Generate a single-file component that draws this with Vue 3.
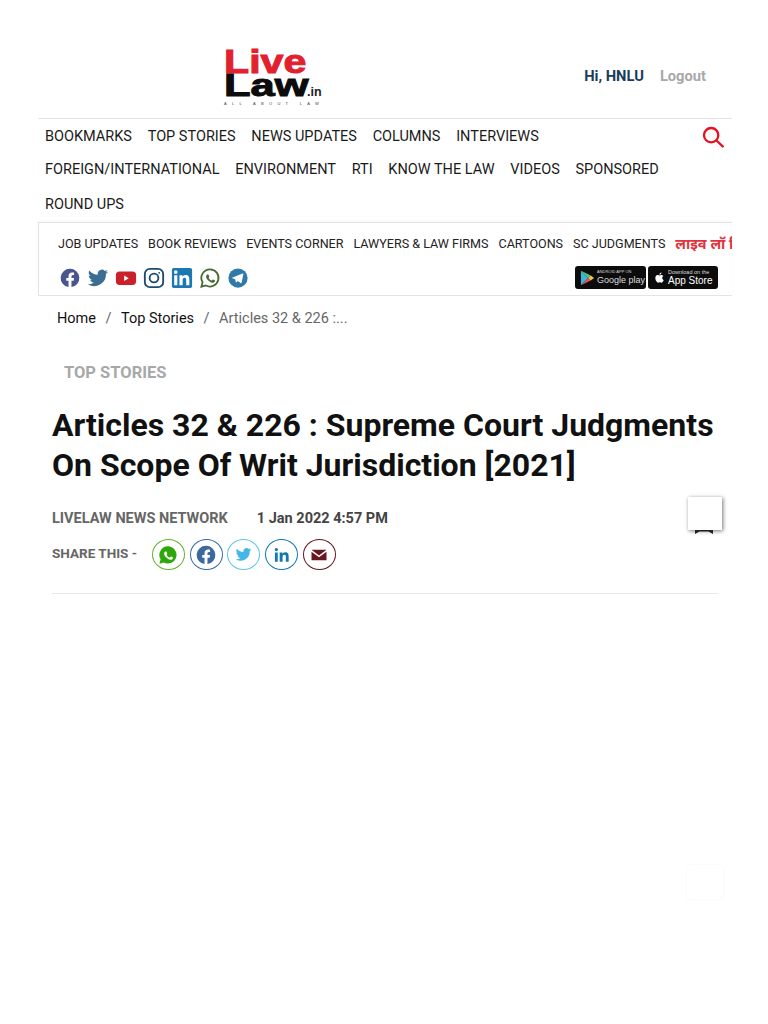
<script setup>
const mainNav = [
  ['BOOKMARKS', 'TOP STORIES', 'NEWS UPDATES', 'COLUMNS', 'INTERVIEWS'],
  ['FOREIGN/INTERNATIONAL', 'ENVIRONMENT', 'RTI', 'KNOW THE LAW', 'VIDEOS', 'SPONSORED'],
  ['ROUND UPS'],
];
const subNav = ['JOB UPDATES', 'BOOK REVIEWS', 'EVENTS CORNER', 'LAWYERS & LAW FIRMS', 'CARTOONS', 'SC JUDGMENTS'];
const fbPath = 'M12 2a10 10 0 0 0-1.6 19.9v-7H7.9V12h2.5V9.8c0-2.5 1.5-3.9 3.8-3.9 1.1 0 2.2.2 2.2.2v2.5h-1.2c-1.2 0-1.6.8-1.6 1.6V12h2.8l-.4 2.9h-2.4v7A10 10 0 0 0 12 2z';
const twPath = 'M23 5.1c-.8.4-1.7.6-2.6.7.9-.6 1.6-1.4 2-2.5-.9.5-1.8.9-2.9 1.1a4.5 4.5 0 0 0-7.7 4.1C8 8.300 4.700 6.500 2.500 3.800c-1.200 2-.6 4.700 1.400 6-.7 0-1.400-.2-2-.6 0 2.200 1.500 4.100 3.600 4.500-.7.2-1.400.2-2 .1.6 1.800 2.200 3.100 4.200 3.100A9.100 9.100 0 0 1 1 18.800a12.800 12.800 0 0 0 19.700-11.400c.9-.6 1.700-1.400 2.300-2.300z';
const waBubble = 'M12 2.500a9.400 9.400 0 0 0-8.100 14.200L2.600 21.500l4.900-1.300A9.400 9.400 0 1 0 12 2.500z';
const waPhone = 'M8.800 7.200c-.3 0-.7.100-1 .5-.4.400-1.100 1.100-1.100 2.500s1 2.900 1.200 3.100c.2.200 2.100 3.200 5.100 4.400 2.500 1 3 .8 3.600.7.600-.1 1.800-.7 2-1.500.2-.700.2-1.300.2-1.400-.1-.200-.3-.3-.6-.4l-2-1c-.3-.1-.5-.1-.7.200l-.9 1.100c-.2.200-.3.200-.6.100-.3-.200-1.200-.5-2.300-1.400-.8-.8-1.400-1.700-1.600-2-.2-.3 0-.5.100-.6l.5-.6c.1-.200.2-.3.300-.5.100-.2 0-.4 0-.5l-.9-2.100c-.2-.5-.4-.5-.6-.5z';
const liPath = 'M5.200 3.500a2 2 0 1 1 0 4 2 2 0 0 1 0-4zM3.500 9h3.400v11H3.500zM9.200 9h3.300v1.500c.5-.9 1.600-1.800 3.300-1.800 3.500 0 4.200 2.300 4.200 5.300v6h-3.400v-5.300c0-1.300 0-2.900-1.800-2.900s-2.100 1.400-2.100 2.800V20H9.200z';
</script>

<template>
  <div class="page">
    <header class="site-head">
      <div class="top-row">
        <div class="logo">
          <div class="logo-live"><span>Live</span></div>
          <div class="logo-law"><span class="law-word">Law</span><span class="logo-in">.in</span></div>
          <div class="logo-tag">ALL ABOUT LAW</div>
        </div>
        <div class="user">
          <span class="hi">Hi, HNLU</span>
          <span class="logout">Logout</span>
        </div>
      </div>

      <nav class="main-nav">
        <div class="nav-links">
          <div v-for="(row, i) in mainNav" :key="i" class="nav-row">
            <span v-for="item in row" :key="item">{{ item }}</span>
          </div>
        </div>
        <svg class="search" viewBox="0 0 24 24" width="22" height="22" fill="none" stroke="#e8101c" stroke-width="2.500">
          <circle cx="10" cy="10" r="7.800" />
          <path d="M15.800 15.800l6.800 6.500" stroke-linecap="round" />
        </svg>
      </nav>

      <div class="sub-nav">
        <div class="sub-links">
          <span v-for="item in subNav" :key="item">{{ item }}</span>
          <span class="hindi">लाइव लॉ हिंदी</span>
        </div>
        <div class="sub-bottom">
          <div class="socials">
            <svg viewBox="0 0 24 24" width="22" height="22" fill="#4a5590"><path :d="fbPath" /></svg>
            <svg viewBox="0 0 24 24" width="22" height="22" fill="#3b6e92"><path :d="twPath" /></svg>
            <svg viewBox="0 0 24 24" width="22" height="22"><rect x="1" y="5" width="22" height="14.500" rx="4" fill="#c9202a" /><path d="M10 9.200l5 3-5 3z" fill="#fff" /></svg>
            <svg viewBox="0 0 24 24" width="22" height="22" fill="none" stroke="#1d4a72" stroke-width="2"><rect x="2" y="2" width="20" height="20" rx="5.500" /><circle cx="12" cy="12" r="4.800" /><circle cx="17.600" cy="6.400" r="1" fill="#1d4a72" stroke="none" /></svg>
            <svg viewBox="0 0 24 24" width="22" height="22"><rect x="1" y="1" width="22" height="22" rx="2" fill="#1b78b0" /><path :d="liPath" fill="#fff" /></svg>
            <svg viewBox="0 0 24 24" width="22" height="22"><path :d="waBubble" fill="#fff" stroke="#44692f" stroke-width="1.900" /><path :d="waPhone" fill="#44692f" transform="translate(2.400 2.400) scale(.8)" /></svg>
            <svg viewBox="0 0 24 24" width="22" height="22"><circle cx="12" cy="12" r="10.500" fill="#2f7aa8" /><path d="M5.500 11.800l11.500-4.600c.6-.2 1 .1.800.9l-1.900 9c-.1.600-.6.800-1.100.4l-3-2.200-1.500 1.400c-.3.300-.5.200-.6-.2l-.9-3.200-2.800-.9c-.6-.2-.6-.5 0-.6z" fill="#fff" /></svg>
          </div>
          <div class="stores">
            <div class="store play">
              <svg viewBox="0 0 20 22" width="15" height="16"><path d="M1 1v20l10-10z" fill="#38b6d8" /><path d="M1 1l10 10 3.500-3.500z" fill="#5cc080" /><path d="M1 21l10-10 3.500 3.500z" fill="#e8505a" /><path d="M14.500 7.500L19 11l-4.500 3.500L11 11z" fill="#f5c542" /></svg>
              <div class="store-text">
                <small>ANDROID APP ON</small>
                <b>Google play</b>
              </div>
            </div>
            <div class="store apple">
              <svg viewBox="0 0 24 24" width="13" height="15" fill="#fff"><path d="M17 12.700c0-2.400 2-3.500 2-3.600-1.100-1.600-2.800-1.800-3.400-1.900-1.400-.1-2.800.9-3.500.9s-1.900-.9-3.100-.8c-1.600 0-3.100.9-3.900 2.300-1.700 2.900-.4 7.200 1.200 9.500.8 1.200 1.800 2.400 3 2.400s1.700-.8 3.100-.8 1.900.8 3.100.8 2.100-1.100 2.900-2.300c.9-1.300 1.300-2.600 1.300-2.700-.1 0-2.700-1-2.700-3.800zM14.700 5.600c.6-.8 1.100-1.900 1-3-1 0-2.100.6-2.800 1.400-.6.700-1.100 1.800-1 2.900 1.100.1 2.200-.5 2.800-1.300z" /></svg>
              <div class="store-text">
                <small>Download on the</small>
                <b>App Store</b>
              </div>
            </div>
          </div>
        </div>
      </div>
    </header>

    <div class="crumbs">
      <span>Home</span><i>/</i><span>Top Stories</span><i>/</i><span class="current">Articles 32 &amp; 226 :...</span>
    </div>

    <main class="article">
      <div class="category">TOP STORIES</div>
      <h1>Articles 32 &amp; 226 : Supreme Court Judgments On Scope Of Writ Jurisdiction [2021]</h1>
      <div class="meta">
        <span class="author">LIVELAW NEWS NETWORK</span>
        <span class="date">1 Jan 2022 4:57 PM</span>
      </div>
      <div class="share">
        <span class="share-label">SHARE THIS -</span>
        <span class="share-btn wa">
          <svg viewBox="0 0 24 24" width="22" height="22"><path :d="waBubble" fill="#2ea70a" /><path :d="waPhone" fill="#fff" transform="translate(2.400 2.400) scale(.8)" /></svg>
        </span>
        <span class="share-btn fb">
          <svg viewBox="0 0 24 24" width="22" height="22" fill="#3b6aa0"><path :d="fbPath" /></svg>
        </span>
        <span class="share-btn tw">
          <svg viewBox="0 0 24 24" width="17" height="17" fill="#45b7e6"><path :d="twPath" /></svg>
        </span>
        <span class="share-btn li">
          <svg viewBox="0 0 24 24" width="20" height="20" fill="#1379ad"><path :d="liPath" /></svg>
        </span>
        <span class="share-btn mail">
          <svg viewBox="0 0 24 24" width="18" height="18"><path d="M2 5h20L12 12.500z" fill="#66171f" /><path d="M2 7.500V19h20V7.500l-10 7.500z" fill="#66171f" /></svg>
        </span>
      </div>
      <hr class="rule" />
    </main>

    <div class="float-box">
      <span class="peek"></span>
    </div>
    <div class="float-ghost"></div>
  </div>
</template>

<style scoped>
.page {
  position: relative;
  min-height: 1024px;
  background: #fff;
  font-family: Roboto, "Liberation Sans", sans-serif;
  color: #111;
  overflow: hidden;
}

.site-head {
  margin: 0 36px 0 38px;
}

.top-row {
  height: 118px;
  display: flex;
  align-items: flex-start;
  border-bottom: 1px solid #e4e4e4;
  box-sizing: content-box;
}

.logo {
  margin: 48px 0 0 186px;
  width: 98px;
  font-family: "Liberation Sans", Arial, sans-serif;
  font-weight: 700;
}

.logo-live {
  color: #e2202e;
  font-size: 34px;
  line-height: 26px;
  -webkit-text-stroke: 1px #e2202e;
}

.logo-live span {
  display: inline-block;
  transform: scaleX(1.21);
  transform-origin: left center;
}

.logo-law {
  display: flex;
  align-items: baseline;
  color: #0c0c0c;
  font-size: 31px;
  line-height: 24px;
  white-space: nowrap;
}

.law-word {
  width: 83px;
  display: inline-block;
  transform: scaleX(1.4);
  transform-origin: left center;
  -webkit-text-stroke: 1px #0c0c0c;
}

.logo-in {
  font-size: 12.500px;
  color: #222;
}

.logo-tag {
  font-size: 4px;
  line-height: 5px;
  letter-spacing: 5.300px;
  white-space: nowrap;
  color: #444;
  font-weight: 400;
  margin-top: -3px;
}

.user {
  margin: 68px 26px 0 auto;
  display: flex;
  gap: 16px;
  font-size: 14.700px;
  line-height: 16px;
  font-weight: 700;
}

.hi {
  color: #173c5c;
}

.logout {
  color: #a8a8a8;
}

.main-nav {
  display: flex;
  justify-content: space-between;
  padding: 0 8px 0 7px;
  height: 103px;
}

.nav-links {
  display: flex;
  flex-direction: column;
  padding-top: 1px;
}

.nav-row {
  display: flex;
  gap: 15.700px;
  height: 33px;
  align-items: center;
  font-size: 14.500px;
  color: #1a1a1a;
}

.nav-row:last-child {
  height: 36px;
}

.search {
  margin-top: 7px;
}

.sub-nav {
  height: 72px;
  border: 1px solid #e4e4e4;
  border-right: 0;
  box-shadow: 0 -1px 2px rgba(0, 0, 0, 0.04);
  padding: 0 0 0 19px;
  overflow: hidden;
}

.sub-links {
  display: flex;
  gap: 10px;
  white-space: nowrap;
  height: 40px;
  align-items: center;
  font-size: 12.560px;
  color: #222;
}

.hindi {
  color: #e2323c;
  font-family: "Noto Sans", "DejaVu Sans", sans-serif;
  font-weight: 700;
  font-size: 14.500px;
}

.sub-bottom {
  display: flex;
  justify-content: space-between;
  align-items: center;
  margin-top: 3px;
  padding: 0 14px 0 1px;
}

.socials {
  display: flex;
  gap: 6px;
}

.stores {
  display: flex;
  gap: 2px;
}

.store {
  height: 23px;
  background: #0c0c0c;
  border-radius: 3px;
  display: flex;
  align-items: center;
  gap: 2px;
  padding: 0 0 0 5px;
  color: #ddd;
  box-sizing: border-box;
}

.store svg {
  flex-shrink: 0;
}

.play {
  width: 71px;
}

.apple {
  width: 70px;
}

.store-text {
  display: flex;
  flex-direction: column;
  white-space: nowrap;
  font-family: "Liberation Sans", Arial, sans-serif;
}

.store-text small {
  font-size: 4px;
  line-height: 6px;
}

.store-text b {
  font-size: 9px;
  line-height: 11px;
  font-weight: 400;
}

.apple .store-text small {
  font-size: 5.500px;
}

.apple .store-text b {
  font-size: 10px;
  color: #fff;
}

.crumbs {
  margin: 12px 0 0 57px;
  display: flex;
  align-items: center;
  height: 20px;
  font-size: 14.500px;
  color: #111;
}

.crumbs i {
  font-style: normal;
  color: #666;
  margin: 0 9.500px;
}

.current {
  color: #666;
}

.article {
  margin: 0 50px 0 52px;
}

.category {
  margin: 35px 0 0 12px;
  font-size: 16.500px;
  line-height: 20px;
  font-weight: 700;
  color: #a8a8a8;
}

h1 {
  margin: 22px 0 0;
  font-size: 32px;
  line-height: 40px;
  font-weight: 700;
  color: #111;
}

.meta {
  margin-top: 24px;
  display: flex;
  gap: 29px;
  font-size: 14.500px;
  line-height: 20px;
  font-weight: 700;
}

.author {
  color: #666;
}

.date {
  color: #444;
}

.share {
  margin-top: 10px;
  display: flex;
  align-items: center;
  gap: 4.700px;
}

.share-label {
  font-size: 13.500px;
  font-weight: 700;
  color: #666;
  width: 95.300px;
  margin-bottom: 3px;
}

.share-btn {
  width: 33px;
  height: 31px;
  border-radius: 50%;
  border: 1px solid;
  display: flex;
  align-items: center;
  justify-content: center;
  box-sizing: border-box;
}

.wa { border-color: #63b32e; }
.fb { border-color: #3b6aa0; }
.tw { border-color: #5cc6ea; }
.li { border-color: #1379ad; }
.mail { border-color: #66171f; }

.rule {
  margin: 23px 0 0;
  border: 0;
  border-top: 1px solid #e8e8e8;
}

.float-box {
  position: absolute;
  left: 688px;
  top: 497px;
  width: 34px;
  height: 33px;
  background: #fff;
  box-shadow: 1px 1px 4px rgba(0, 0, 0, 0.55);
}

.peek {
  position: absolute;
  left: 7px;
  top: 33px;
  width: 18px;
  height: 4px;
  background: #222;
  clip-path: polygon(0 0, 100% 0, 100% 100%, 75% 35%, 25% 35%, 0 100%);
}

.float-ghost {
  position: absolute;
  left: 687px;
  top: 865px;
  width: 36px;
  height: 34px;
  border-radius: 4px;
  background: #fff;
  box-shadow: 0 0 3px rgba(0, 0, 0, 0.05);
}
</style>
